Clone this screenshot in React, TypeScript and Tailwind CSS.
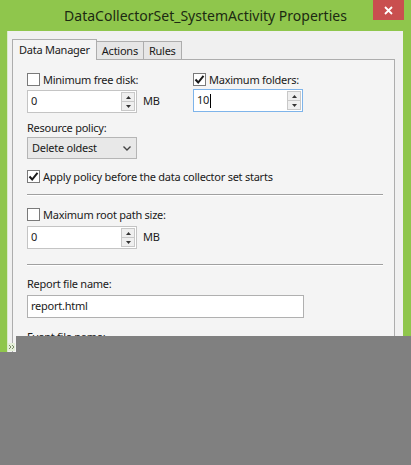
import React from 'react';

const font = "font-['Noto_Sans','Segoe_UI',sans-serif]";

const Check = () => (
  <svg width="11" height="11" viewBox="0 0 11 11" className="block">
    <path d="M1.5 5.5 L4.2 8.5 L9.5 1.8" fill="none" stroke="#1a1a1a" strokeWidth="2" />
  </svg>
);

const CheckBox: React.FC<{ checked?: boolean; label: string }> = ({ checked, label }) => (
  <div className="flex items-center h-[17px]">
    <div className="w-[13px] h-[13px] border border-[#7a7a7a] bg-white flex items-center justify-center">
      {checked && <Check />}
    </div>
    <span className="ml-[3px] leading-none">{label}</span>
  </div>
);

const Arrow: React.FC<{ up?: boolean }> = ({ up }) => (
  <svg width="5" height="3" viewBox="0 0 5 3" className="block">
    <path d={up ? 'M0 3 L2.5 0 L5 3 Z' : 'M0 0 L2.5 3 L5 0 Z'} fill="#333" />
  </svg>
);

const Spinner: React.FC<{ value: string; focused?: boolean }> = ({ value, focused }) => (
  <div
    className={`flex h-[23px] w-[110px] bg-white border ${focused ? 'border-[#7eb4ea]' : 'border-[#c4c4c4]'}`}
  >
    <div className="flex-1 flex items-center pl-[3px]">
      {value}
      {focused && <span className="w-px h-[14px] bg-black ml-px" />}
    </div>
    <div className="flex flex-col w-[14px] mr-[1px] my-[1px]">
      <div className="flex-1 flex items-center justify-center border border-[#c8c8c8] bg-[#efefef]">
        <Arrow up />
      </div>
      <div className="flex-1 flex items-center justify-center border border-t-0 border-[#c8c8c8] bg-[#efefef]">
        <Arrow />
      </div>
    </div>
  </div>
);

const Separator = () => (
  <div className="mr-[11px]">
    <div className="h-px bg-[#a0a0a0]" />
    <div className="h-px bg-white" />
  </div>
);

export default function App() {
  return (
    <div className={`relative w-[411px] h-[465px] overflow-hidden bg-[#8fc64c] ${font}`}>
      {/* title bar */}
      <div className="relative h-[31px] flex items-center justify-center">
        <span className="text-[14px] text-[#1c2a12] -mt-[1px]">DataCollectorSet_SystemActivity Properties</span>
        <div className="absolute right-[7px] top-0 w-[31px] h-[20px] bg-[#c94f4f] flex items-center justify-center">
          <svg width="9" height="9" viewBox="0 0 9 9">
            <path d="M1 1 L8 8 M8 1 L1 8" stroke="#fff" strokeWidth="1.8" />
          </svg>
        </div>
      </div>

      {/* client area */}
      <div className="ml-[7px] mr-[8px] h-[440px] bg-[#f0f0f0] border-l border-[#d9ebc8] pl-[4px] pr-[8px] pt-[7px] text-[11px] tracking-[-0.25px] text-[#1a1a1a]">
        {/* tabs */}
        <div className="flex items-end h-[21px]">
          <div className="relative z-10 h-[21px] -mb-px px-[6px] pt-[2px] bg-[#f4f4f4] border border-b-0 border-[#adadad]">
            Data Manager
          </div>
          <div className="h-[18px] px-[5px] pt-px bg-[#e6e6e6] border border-l-0 border-b-0 border-[#adadad]">
            Actions
          </div>
          <div className="h-[18px] px-[5px] pt-px bg-[#e6e6e6] border border-l-0 border-b-0 border-[#adadad]">
            Rules
          </div>
        </div>

        {/* tab page */}
        <div className="h-[400px] border border-[#adadad] bg-[#f4f4f4] pl-[14px] pt-[11px]">
          <div className="flex">
            <div className="w-[166px]">
              <CheckBox label="Minimum free disk:" />
              <div className="flex items-center mt-[2px]">
                <Spinner value="0" />
                <span className="ml-[6px]">MB</span>
              </div>
            </div>
            <div>
              <CheckBox checked label="Maximum folders:" />
              <div className="mt-[1px]">
                <Spinner value="10" focused />
              </div>
            </div>
          </div>

          <div className="mt-[7px] h-[16px] flex items-center">Resource policy:</div>
          <div className="mt-[1px] w-[110px] h-[22px] flex items-center justify-between pl-[4px] pr-[5px] border border-[#b5b5b5] bg-[#e8e8e8]">
            <span>Delete oldest</span>
            <svg width="8" height="5" viewBox="0 0 8 5">
              <path d="M0.5 0.5 L4 4 L7.5 0.5" fill="none" stroke="#444" strokeWidth="1.4" />
            </svg>
          </div>

          <div className="mt-[9px]">
            <CheckBox checked label="Apply policy before the data collector set starts" />
          </div>

          <div className="mt-[9px]">
            <Separator />
          </div>

          <div className="mt-[10px]">
            <CheckBox label="Maximum root path size:" />
          </div>
          <div className="flex items-center mt-[3px]">
            <Spinner value="0" />
            <span className="ml-[6px]">MB</span>
          </div>

          <div className="mt-[15px]">
            <Separator />
          </div>

          <div className="mt-[10px] h-[16px] flex items-center">Report file name:</div>
          <div className="mt-[3px] w-[277px] h-[23px] flex items-center pl-[3px] bg-white border border-[#b0b0b0]">
            report.html
          </div>

          <div className="mt-[11px] h-[16px] flex items-center">Event file name:</div>
        </div>
      </div>

      {/* gray overlay covering the lower part */}
      <div className="absolute left-[16px] right-0 top-[336px] bottom-0 bg-[#808080]" />
      <div className="absolute left-0 right-0 top-[352px] bottom-0 bg-[#808080]" />
      <div className="absolute left-[8px] top-[343px] w-[7px] h-[8px] bg-[#e4efd8] flex items-center justify-center">
        <svg width="7" height="7" viewBox="0 0 7 7">
          <path d="M1 1 L3 3 L1 5 M4 1 L6 3 L4 5" fill="none" stroke="#7a8a6a" strokeWidth="1" />
        </svg>
      </div>
    </div>
  );
}
